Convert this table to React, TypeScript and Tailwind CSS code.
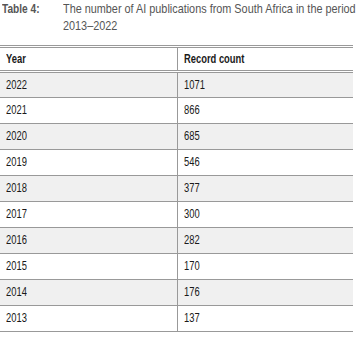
const rows: [string, string][] = [
  ["2022", "1071"],
  ["2021", "866"],
  ["2020", "685"],
  ["2019", "546"],
  ["2018", "377"],
  ["2017", "300"],
  ["2016", "282"],
  ["2015", "170"],
  ["2014", "176"],
  ["2013", "137"],
];

// Condensed look: Arial-metric font squeezed horizontally
function Narrow({ children, className = "" }: { children: React.ReactNode; className?: string }) {
  return <span className={`inline-block origin-left whitespace-nowrap ${className}`}>{children}</span>;
}

export default function App() {
  return (
    <div className="h-[338px] w-[358px] overflow-hidden bg-white font-['Liberation_Sans',Arial,sans-serif]">
      {/* Caption */}
      <div className="flex pl-[2px] text-[13px] leading-[17px] text-[#555]">
        <div className="w-[61px] shrink-0 font-bold">
          <Narrow className="scale-x-[0.78]">Table 4:</Narrow>
        </div>
        <div className="flex min-w-0 flex-col">
          <Narrow className="scale-x-[0.835]">The number of AI publications from South Africa in the period</Narrow>
          <Narrow className="scale-x-[0.835]">2013–2022</Narrow>
        </div>
      </div>

      <table className="mt-[11px] w-[353px] table-fixed border-collapse text-[12.5px] text-[#1a1a1a]">
        <thead>
          <tr className="border-y-[3px] border-double border-[#999]">
            <th className="h-[25px] w-[177px] overflow-hidden border-r border-[#999] pl-[6px] text-left font-bold">
              <Narrow className="scale-x-[0.75]">Year</Narrow>
            </th>
            <th className="overflow-hidden pl-[6px] text-left font-bold">
              <Narrow className="scale-x-[0.75]">Record count</Narrow>
            </th>
          </tr>
        </thead>
        <tbody>
          {rows.map(([year, count], i) => (
            <tr key={year} className={`border-b border-[#999] ${i % 2 === 0 ? "bg-[#f0f0f0]" : "bg-white"}`}>
              <td className="h-[26px] border-r border-[#999] pl-[6px]">
                <Narrow className="scale-x-[0.75]">{year}</Narrow>
              </td>
              <td className="pl-[6px]">
                <Narrow className="scale-x-[0.75]">{count}</Narrow>
              </td>
            </tr>
          ))}
        </tbody>
      </table>
    </div>
  );
}
